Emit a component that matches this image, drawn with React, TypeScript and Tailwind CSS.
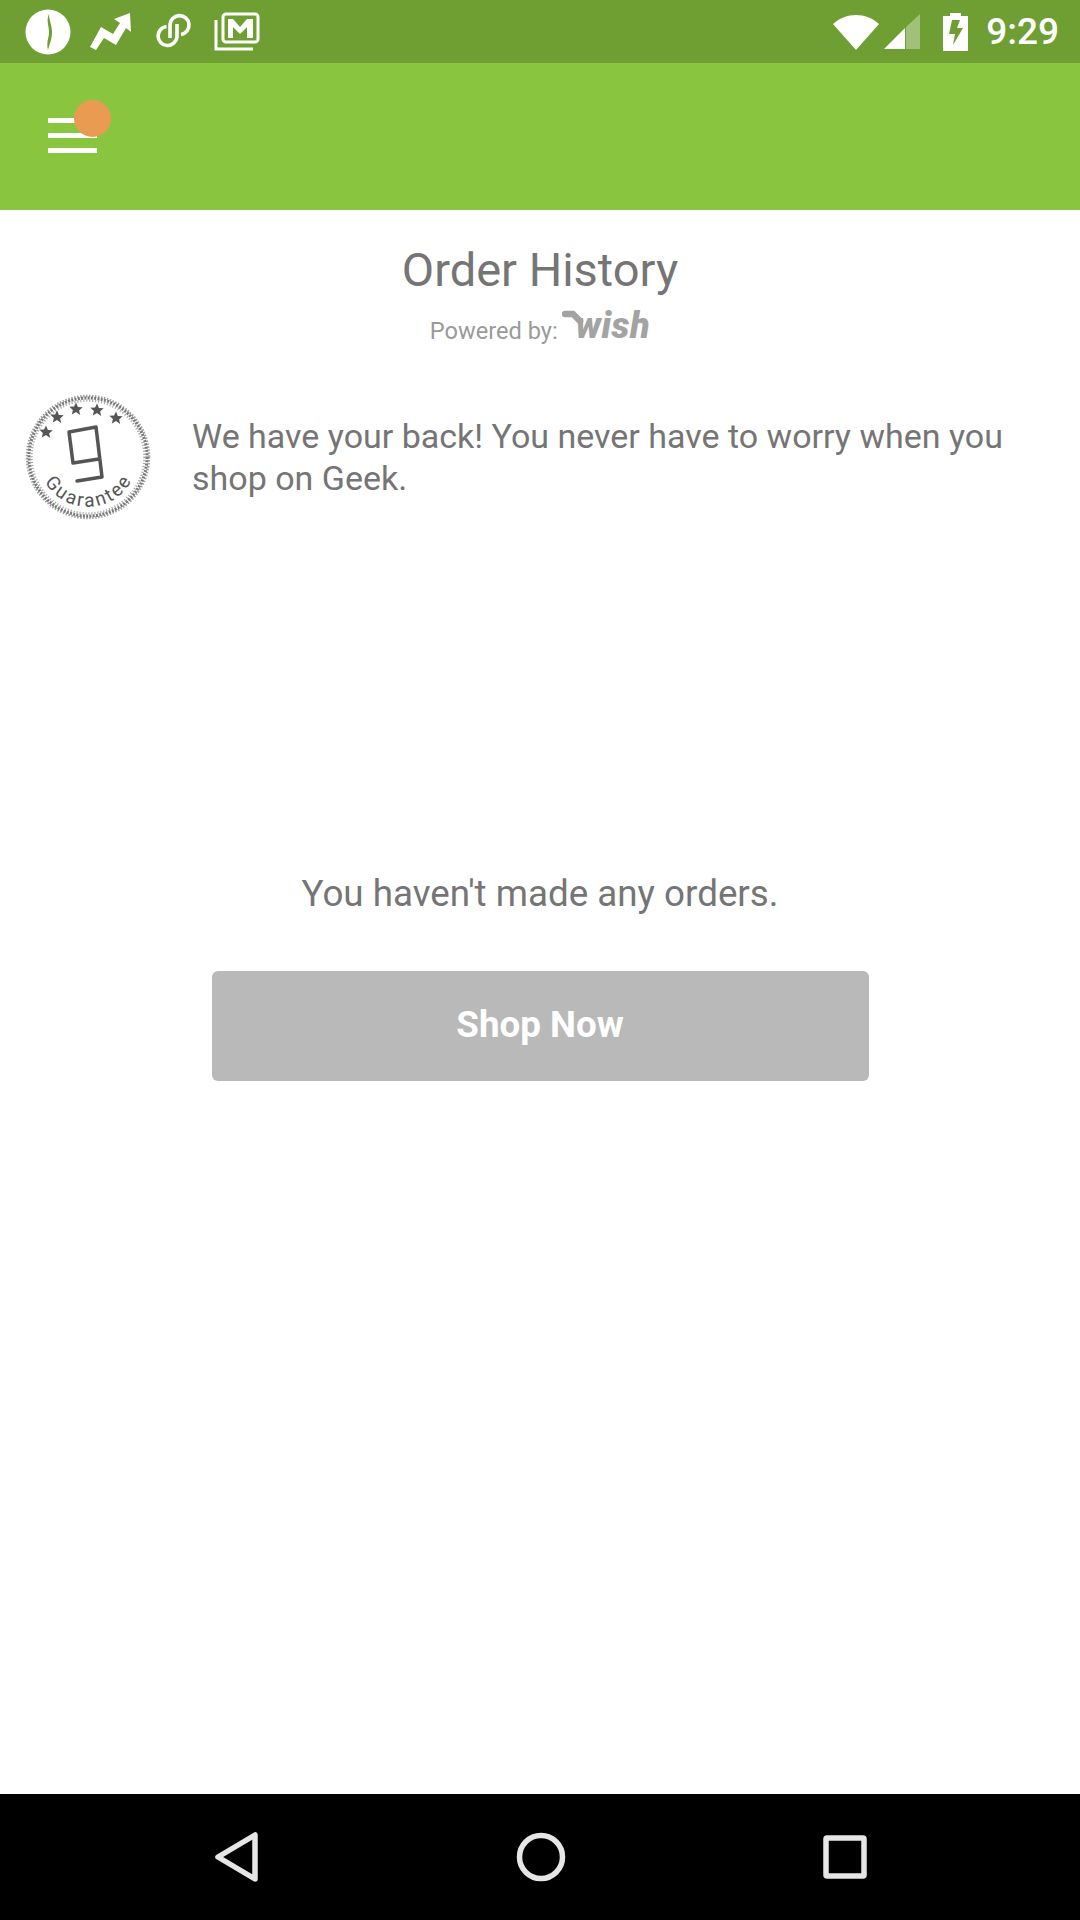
const FONT = "font-['Roboto','Liberation_Sans',sans-serif]";

function StatusLeftIcons() {
  return (
    <div className="flex items-center">
      <svg width="46" height="46" viewBox="0 0 46 46" className="ml-[25px]">
        <circle cx="23" cy="23" r="22.5" fill="#fff" />
        <path d="M24 5c-3 6 0 12 0 18s-3 10-1 18c2-7 4-11 4-18S24 11 24 5z" fill="#6f9f33" />
      </svg>
      <svg width="42" height="42" viewBox="0 0 42 42" className="ml-[18px]">
        <path d="M1 36l11-20 12 7 7-11-6-4 16-6 1 19-5-4-10 17-12-7-8 12z" fill="#fff" />
      </svg>
      <svg width="36" height="37" viewBox="0 0 36 37" className="ml-[25px]" fill="none" stroke="#fff" strokeWidth="3.6">
        <path d="M25 21.5A9.5 9.5 0 1 0 14 12V25" />
        <path d="M10.5 13.5A9.5 9.5 0 1 0 21 24V11" />
      </svg>
      <svg width="46" height="40" viewBox="0 0 46 40" className="ml-[22px]" fill="none">
        <path d="M2 8v29h37" stroke="#fff" strokeWidth="3" />
        <rect x="9" y="2" width="35" height="28" rx="3" stroke="#fff" strokeWidth="3" />
        <path d="M14 7h5l7 8 7-8h6v19h-6V15l-7 7-7-7v11h-5z" fill="#fff" />
      </svg>
    </div>
  );
}

function StatusRightIcons() {
  return (
    <div className="flex items-center">
      <svg width="48" height="38" viewBox="0 0 48 38">
        <path d="M1 11C14 -1 34 -1 47 11L24 37z" fill="#fff" />
      </svg>
      <svg width="37" height="37" viewBox="0 0 37 37" className="ml-[4px]">
        <path d="M0 36L21 15V36z" fill="#fff" />
        <path d="M22 14L36 1V36H22z" fill="#fff" fillOpacity="0.35" />
      </svg>
      <svg width="25" height="38" viewBox="0 0 25 38" className="ml-[22px]">
        <path d="M7 0h11v3h7v35H0V3h7z" fill="#fff" />
        <path d="M17 7H9L6 21h6l-2 11 10-17h-6z" fill="#6f9f33" />
      </svg>
      <span className="ml-[18px] mr-[21px] text-[37px] leading-none font-medium text-white">9:29</span>
    </div>
  );
}

function MenuButton() {
  return (
    <div className="relative ml-[48px] mt-[55px] flex w-[49px] flex-col gap-[10px]">
      <div className="h-[5px] bg-white" />
      <div className="h-[5px] bg-white" />
      <div className="h-[5px] bg-white" />
      <span className="absolute left-[26px] top-[-18px] h-[37px] w-[37px] rounded-full bg-[#ea9b52]" />
    </div>
  );
}

function GuaranteeBadge() {
  const stars: [number, number][] = [
    [22, 39],
    [33, 24],
    [52, 16],
    [73, 17],
    [92, 25],
  ];
  return (
    <svg width="128" height="128" viewBox="0 0 128 128" className="shrink-0">
      <defs>
        <path id="badge-arc" d="M20.7 89A50 50 0 0 0 113 73" />
      </defs>
      <circle cx="64" cy="64" r="61" fill="none" stroke="#a0a0a0" strokeWidth="2.5" strokeDasharray="1.5 1.5" />
      <circle cx="64" cy="64" r="59" fill="none" stroke="#777" strokeWidth="3" strokeDasharray="2 1.3" />
      <circle cx="64" cy="64" r="56.5" fill="none" stroke="#aaa" strokeWidth="2.5" strokeDasharray="1.2 1.8" />
      {stars.map(([x, y]) => (
        <path
          key={x}
          transform={`translate(${x} ${y})`}
          d="M0-6.5l1.9 4.4 4.8.4-3.6 3.1 1.1 4.7L0 3.1l-4.2 2.5 1.1-4.7-3.6-3.1 4.8-.4z"
          fill="#555"
        />
      ))}
      <path
        d="M45 39L72 34 78 84 53 88M45 39L49 70 75 66"
        fill="none"
        stroke="#555"
        strokeWidth="3.5"
        strokeLinejoin="round"
        strokeLinecap="round"
      />
      <text fontSize="19" fill="#555" letterSpacing="2.2" fontFamily="Roboto, sans-serif">
        <textPath href="#badge-arc">Guarantee</textPath>
      </text>
    </svg>
  );
}

function WishMark() {
  return (
    <span className="relative mb-[8px] ml-[18px] inline-block text-[36px] leading-none font-black italic tracking-[0.5px] text-[#a3a3a3]">
      <svg width="26" height="18" viewBox="0 0 26 18" className="absolute left-[-14px] top-[2px]">
        <path d="M3 4l8 0 7 7" fill="none" stroke="#a3a3a3" strokeWidth="6.5" strokeLinecap="round" strokeLinejoin="round" />
      </svg>
      <span className="relative">wish</span>
    </span>
  );
}

export default function App() {
  return (
    <div className={`flex h-[1920px] w-[1080px] flex-col bg-white ${FONT}`}>
      <div className="flex h-[63px] shrink-0 items-center justify-between bg-[#6f9f33]">
        <StatusLeftIcons />
        <StatusRightIcons />
      </div>

      <div className="h-[147px] shrink-0 bg-[#8ac540]">
        <MenuButton />
      </div>

      <div className="flex flex-1 flex-col">
        <h1 className="mt-[33px] text-center text-[47px] leading-[54px] font-normal text-[#757575]">
          Order History
        </h1>
        <div className="mt-[14px] flex h-[37px] items-center justify-center">
          <span className="mt-[3px] text-[23.6px] leading-[34px] text-[#9a9a9a]">Powered by:</span>
          <WishMark />
        </div>

        <div className="mt-[45px] flex items-center pl-[24px] pr-[60px]">
          <GuaranteeBadge />
          <p className="ml-[40px] mt-[-1px] text-[34px] leading-[42px] text-[#757575]">
            We have your back! You never have to worry when you shop on Geek.
          </p>
        </div>

        <p className="mt-[351px] text-center text-[36.75px] leading-[44px] text-[#757575]">
          You haven't made any orders.
        </p>
        <button
          type="button"
          className="mx-auto mt-[55px] h-[110px] w-[657px] rounded-[6px] bg-[#b9b9b9] pb-[3px] text-[36.75px] font-bold text-white"
        >
          Shop Now
        </button>
      </div>

      <div className="flex h-[126px] shrink-0 items-center justify-between bg-black pl-[215px] pr-[213px]">
        <svg width="44" height="50" viewBox="0 0 44 50" fill="none" stroke="#e6e6e6" strokeWidth="5.5" strokeLinejoin="round">
          <path d="M40 3V47L3 25z" />
        </svg>
        <svg width="50" height="50" viewBox="0 0 50 50" fill="none" stroke="#e6e6e6" strokeWidth="5.5">
          <circle cx="25" cy="25" r="21.5" />
        </svg>
        <svg width="44" height="44" viewBox="0 0 44 44" fill="none" stroke="#e6e6e6" strokeWidth="5.5" strokeLinejoin="round">
          <rect x="3" y="3" width="38" height="38" rx="1" />
        </svg>
      </div>
    </div>
  );
}
